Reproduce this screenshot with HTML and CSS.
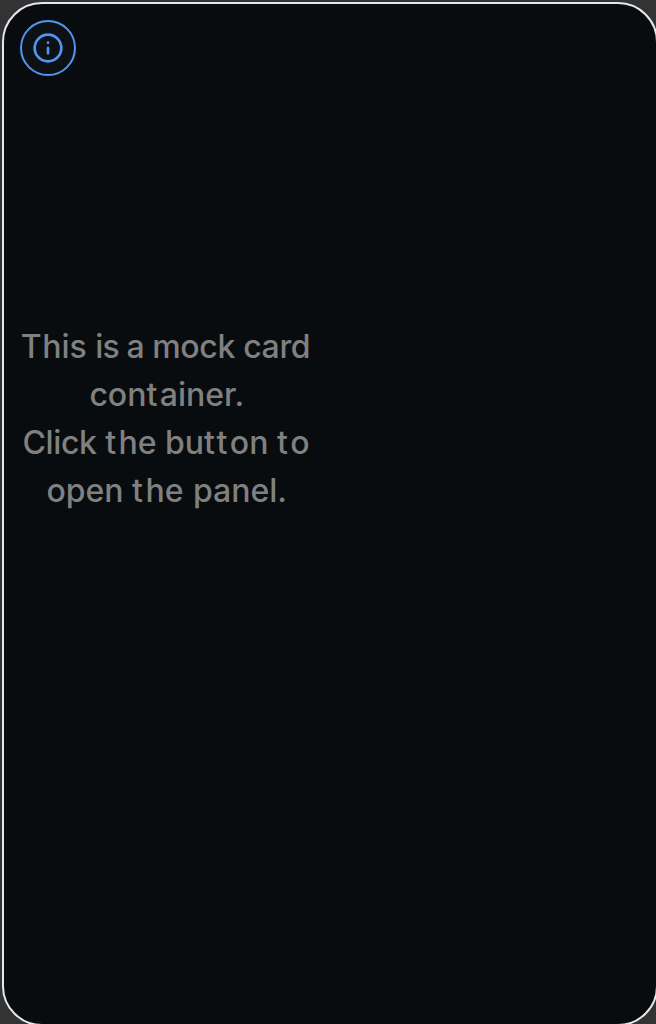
FILE: index.html
```html
<!DOCTYPE html>
<html lang="en">
<head>
<meta charset="utf-8">
<title>Card</title>
<link rel="stylesheet" href="styles.css">
</head>
<body>
<main class="card">
  <button class="info" aria-label="Info">
    <svg class="icon" viewBox="0 0 24 24"><circle cx="12" cy="12" r="10"/><path d="M12 16v-4M12 8h.01"/></svg>
  </button>
  <p class="message"><span class="first">T</span>his <span class="narrow">is a</span> <span class="snug">mock card</span><br><span class="nudge">con<span class="t">t</span>ainer.</span><br><span class="snug">Click</span> <span class="t">t</span>he bu<span class="t">t</span><span class="t">t</span>on <span class="t">t</span>o<br><span class="nudge">open <span class="t">t</span>he <span class="panel">panel.</span></span></p>
</main>
</body>
</html>
```

FILE: styles.css
```css
* { box-sizing: border-box; }
body {
  margin: 0;
  height: 1024px;
  padding: 2px 0 0 2px;
  overflow: hidden;
  background: #333;
  font-family: Inter, sans-serif;
}
.card {
  width: 656px;
  height: 1024px;
  padding: 16px;
  border: 2px solid #e8e8ea;
  border-radius: 40px;
  background: #080c0e;
}
.info {
  display: flex;
  align-items: center;
  justify-content: center;
  width: 56px;
  height: 56px;
  padding: 0;
  border: 2px solid #5096f0;
  border-radius: 50%;
  background: #0d1113;
}
.icon {
  width: 32px;
  height: 32px;
  fill: none;
  stroke: #5096f6;
  stroke-width: 2;
  stroke-linecap: round;
  stroke-linejoin: round;
}
.message {
  width: 292px;
  margin: 247px 0 0;
  color: #808080;
  font-size: 32px;
  font-weight: 500;
  line-height: 48px;
  text-align: center;
  white-space: nowrap;
}
.first { margin-left: -1px; letter-spacing: 0.6px; }
.narrow { letter-spacing: -0.9px; }
.snug { letter-spacing: -0.35px; }
.t { letter-spacing: 2.4px; }
.nudge { padding-left: 1.5px; }
.panel { margin-left: 1px; }
```
